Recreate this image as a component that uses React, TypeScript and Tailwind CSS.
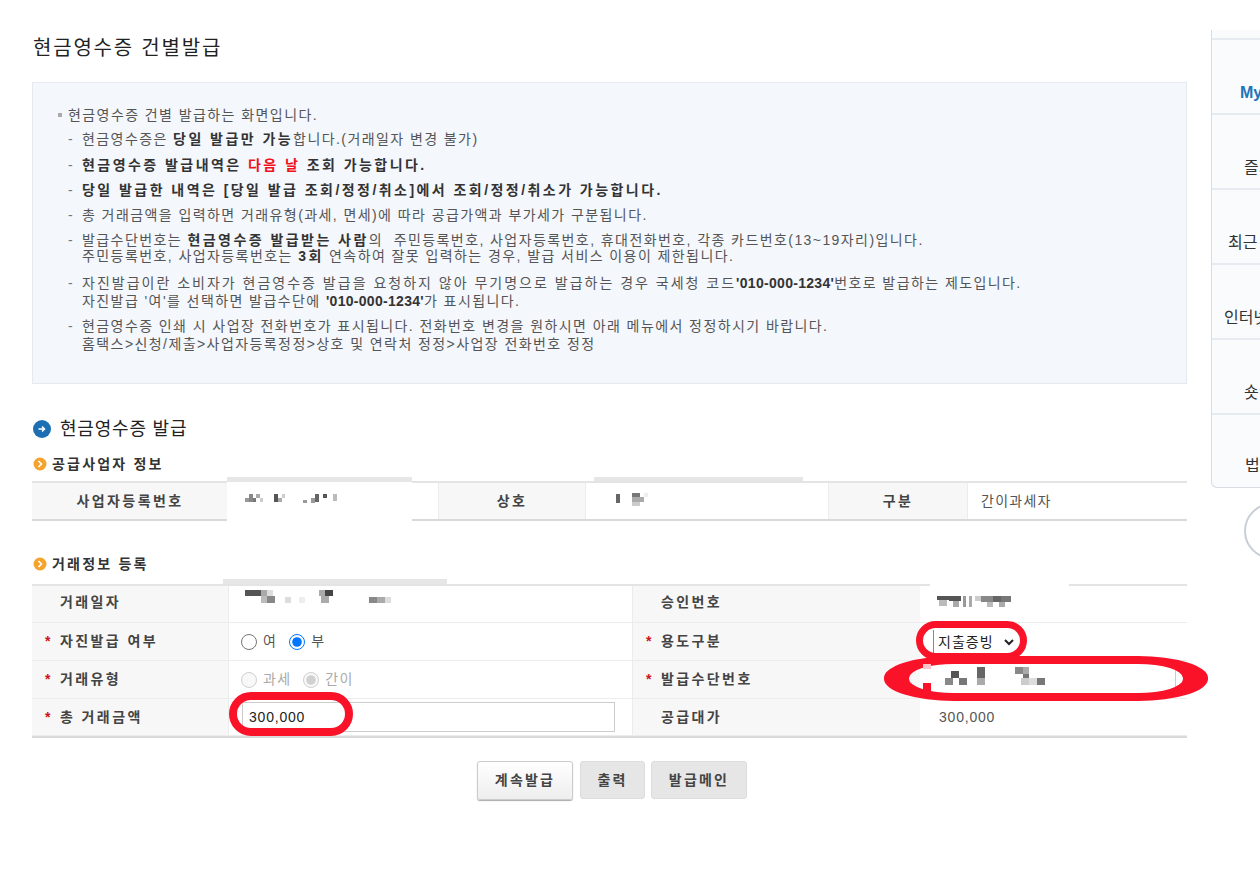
import React from 'react';

const FONT = "font-['Liberation_Sans','Noto_Sans_CJK_KR',sans-serif]";

type Block = [number, number, number, number, string];

// pixelated redaction marks
const Mosaic = ({ className, w, h, blocks }: { className: string; w: number; h: number; blocks: Block[] }) => (
    <svg className={className} width={w} height={h} viewBox={`0 0 ${w} ${h}`} shapeRendering="crispEdges">
        {blocks.map(([x, y, bw, bh, fill], i) => (
            <rect key={i} x={x} y={y} width={bw} height={bh} fill={fill} />
        ))}
    </svg>
);

const OrangeIcon = () => (
    <svg width="14" height="14" viewBox="0 0 14 14" className="shrink-0">
        <circle cx="7" cy="7" r="6.5" fill="#f5a32c" />
        <path d="M5.5 4l3 3-3 3" fill="none" stroke="#fff" strokeWidth="1.6" />
    </svg>
);

const BlueIcon = () => (
    <svg width="18" height="18" viewBox="0 0 18 18" className="shrink-0">
        <circle cx="9" cy="9" r="9" fill="#1d6fb3" />
        <path d="M5.5 9h6M9 6.5L11.5 9 9 11.5" fill="none" stroke="#fff" strokeWidth="1.5" />
    </svg>
);

const Note = ({ children, className = '' }: { children: React.ReactNode; className?: string }) => (
    <div className={`flex ${className}`}>
        <span className="w-[14px] shrink-0 text-[#777]">-</span>
        <div>{children}</div>
    </div>
);

const B = ({ children }: { children: React.ReactNode }) => (
    <b className="text-[#333] tracking-[2.45px]">{children}</b>
);

const Code = () => <b className="text-[#333] tracking-[0.3px]">'010-000-1234'</b>;

const Label = ({ children, star, wide, className = '' }: { children: React.ReactNode; star?: boolean; wide?: boolean; className?: string }) => (
    <div className={`flex items-center bg-[#f7f7f7] font-bold text-[#444] tracking-[2.4px] ${wide ? 'border-l border-[#ececec]' : ''} ${className}`}>
        <span className="w-[28px] shrink-0 pl-[13px] text-[#d0121b]">{star ? '*' : ''}</span>
        {children}
    </div>
);

const Center = ({ children, className = '' }: { children: React.ReactNode; className?: string }) => (
    <div className={`flex items-center justify-center bg-[#f7f7f7] font-bold text-[#444] tracking-[2.4px] ${className}`}>
        {children}
    </div>
);

const SideItem = ({ text, pad, className = '' }: { text: string; pad: string; className?: string }) => (
    <div className={`h-[75px] flex items-end pb-[8px] border-b-2 border-[#e6ebf1] whitespace-nowrap text-[16px] text-[#333] ${pad} ${className}`}>
        {text}
    </div>
);

export default function App() {
    return (
        <div className={`${FONT} relative w-[1260px] h-[891px] overflow-hidden bg-white flex text-[14px] text-[#555]`}>
            <main className="ml-[32px] w-[1155px] shrink-0">
                <h1 className="mt-[34px] ml-[1px] h-[28px] leading-[28px] text-[20px] text-[#222] tracking-[1.8px]">현금영수증 건별발급</h1>

                <section className="mt-[20px] h-[302px] border border-[#e5eaf1] bg-[#f4f7fc] pl-[25px] pt-[23px] leading-[18px] tracking-[1.42px] text-[#555]">
                    <div className="flex items-center h-[18px]">
                        <span className="w-[4px] h-[4px] bg-[#aaa] mr-[6px]" />
                        현금영수증 건별 발급하는 화면입니다.
                    </div>
                    <div className="pl-[10px]">
                        <Note className="mt-[6px]">현금영수증은 <B>당일 발급만 가능</B>합니다.(거래일자 변경 불가)</Note>
                        <Note className="mt-[8px]"><B>현금영수증 발급내역은 <span className="text-[#f01020]">다음 날</span> 조회 가능합니다.</B></Note>
                        <Note className="mt-[7px]"><B>당일 발급한 내역은 [당일 발급 조회/정정/취소]에서 조회/정정/취소가 가능합니다.</B></Note>
                        <Note className="mt-[7px]">총 거래금액을 입력하면 거래유형(과세, 면세)에 따라 공급가액과 부가세가 구분됩니다.</Note>
                        <Note className="mt-[8px] leading-[16px]">
                            발급수단번호는 <B>현금영수증 발급받는 사람</B>의 &nbsp;주민등록번호, 사업자등록번호, 휴대전화번호, 각종 카드번호(13~19자리)입니다.
                            <br />
                            주민등록번호, 사업자등록번호는 <B>3회</B> 연속하여 잘못 입력하는 경우, 발급 서비스 이용이 제한됩니다.
                        </Note>
                        <Note className="mt-[10px]">
                            <span className="tracking-[2px]">자진발급이란 소비자가 현금영수증 발급을 요청하지 않아 무기명으로 발급하는 경우 국세청 코드</span><Code />번호로 발급하는 제도입니다.
                            <br />
                            자진발급 '여'를 선택하면 발급수단에 <Code />가 표시됩니다.
                        </Note>
                        <Note className="mt-[7px]">
                            현금영수증 인쇄 시 사업장 전화번호가 표시됩니다. 전화번호 변경을 원하시면 아래 메뉴에서 정정하시기 바랍니다.
                            <br />
                            홈택스&gt;신청/제출&gt;사업자등록정정&gt;상호 및 연락처 정정&gt;사업장 전화번호 정정
                        </Note>
                    </div>
                </section>

                <h2 className="mt-[32px] ml-[1px] h-[26px] flex items-center gap-[9px] text-[18px] text-[#222] tracking-[0.8px]">
                    <BlueIcon />
                    현금영수증 발급
                </h2>

                <h3 className="mt-[12px] ml-[1px] h-[20px] flex items-center gap-[5px] font-bold text-[#333] tracking-[2.2px]">
                    <OrangeIcon />
                    공급사업자 정보
                </h3>

                <div className="relative mt-[7px] h-[40px] grid grid-cols-[196px_210px_148px_242px_140px_219px] border-t-2 border-b-2 border-t-[#e4e4e4] border-b-[#d9d9d9]">
                    <Center>사업자등록번호</Center>
                    <div className="bg-white" />
                    <Center className="border-x border-[#ececec]">상호</Center>
                    <div className="bg-white" />
                    <Center className="border-x border-[#ececec]">구분</Center>
                    <div className="flex items-center pl-[13px] text-[#555] tracking-[1.27px]">간이과세자</div>

                    <div className="absolute left-[195px] top-[-6px] w-[185px] h-[5px] bg-[#e6e6e6]" />
                    <div className="absolute left-[195px] top-[-1px] w-[185px] h-[41px] bg-white" />
                    <div className="absolute left-[562px] top-[-6px] w-[209px] h-[4px] bg-[#e6e6e6]" />
                    <Mosaic className="absolute left-[213px] top-[11px]" w={100} h={14} blocks={[
                        [0, 4, 4, 4, '#999'], [4, 0, 4, 8, '#888'], [8, 4, 3, 4, '#777'], [11, 0, 4, 4, '#aaa'], [15, 4, 3, 4, '#ccc'],
                        [29, 0, 4, 8, '#555'], [33, 4, 4, 4, '#aaa'], [37, 0, 3, 4, '#ccc'], [58, 6, 4, 3, '#999'], [66, 4, 4, 5, '#999'],
                        [70, 0, 4, 8, '#666'], [78, 0, 4, 4, '#555'], [88, 0, 4, 7, '#bbb'],
                    ]} />
                    <Mosaic className="absolute left-[584px] top-[10px]" w={32} h={16} blocks={[
                        [0, 1, 4, 9, '#666'], [16, 0, 8, 4, '#777'], [16, 4, 12, 5, '#aaa'], [16, 9, 8, 4, '#ccc'], [28, 0, 4, 4, '#eee'],
                    ]} />
                </div>

                <h3 className="mt-[33px] ml-[1px] h-[20px] flex items-center gap-[5px] font-bold text-[#333] tracking-[2.2px]">
                    <OrangeIcon />
                    거래정보 등록
                </h3>

                <div className="relative mt-[10px] grid grid-cols-[196px_404px_288px_267px] grid-rows-[37px_38px_38px_37px] border-t-2 border-b-2 border-t-[#e4e4e4] border-b-[#d9d9d9] [&>*]:border-b [&>*]:border-[#ececec]">
                    <Label className="pb-[3px]">거래일자</Label>
                    <div className="border-l border-[#ececec]" />
                    <Label wide className="pb-[3px]">승인번호</Label>
                    <div />

                    <Label star>자진발급 여부</Label>
                    <div className="flex items-center pl-[12px] border-l gap-[6px] tracking-[1.27px]">
                        <input type="radio" name="self" className="m-0 w-[16px] h-[16px]" />
                        <span className="mr-[6px]">여</span>
                        <input type="radio" name="self" defaultChecked className="m-0 w-[16px] h-[16px]" />
                        <span>부</span>
                    </div>
                    <Label star wide>용도구분</Label>
                    <div className="flex items-center pl-[13px]">
                        <select className="w-[84px] h-[24px] bg-white border-l border-[#888] text-[14px] text-[#222] tracking-[1px]" defaultValue="a">
                            <option value="a">지출증빙</option>
                        </select>
                    </div>

                    <Label star>거래유형</Label>
                    <div className="flex items-center pl-[12px] border-l gap-[6px] text-[#aaa] tracking-[1.27px]">
                        <input type="radio" name="kind" disabled className="m-0 w-[16px] h-[16px]" />
                        <span className="mr-[6px]">과세</span>
                        <input type="radio" name="kind" disabled defaultChecked className="m-0 w-[16px] h-[16px]" />
                        <span>간이</span>
                    </div>
                    <Label star wide>발급수단번호</Label>
                    <div className="flex items-center">
                        <div className="ml-[1px] w-[255px] h-[26px] border-r border-[#ccc]" />
                    </div>

                    <Label star>총 거래금액</Label>
                    <div className="flex items-center pl-[13px] border-l">
                        <input
                            readOnly
                            value="300,000"
                            className="w-[373px] h-[30px] border border-[#ccc] pl-[6px] text-[14px] tracking-[0.8px] text-[#222] outline-none"
                        />
                    </div>
                    <Label wide>공급대가</Label>
                    <div className="flex items-center pl-[19px] text-[14px] tracking-[0.8px] text-[#555]">300,000</div>

                    <div className="absolute !border-0 left-[191px] top-[-7px] w-[224px] h-[5px] bg-[#e6e6e6]" />
                    <div className="absolute !border-0 left-[898px] top-[-7px] w-[139px] h-[8px] bg-white" />
                    <Mosaic className="absolute !border-0 left-[213px] top-[4px]" w={148} h={18} blocks={[
                        [0, 0, 16, 6, '#555'], [16, 0, 6, 6, '#aaa'], [22, 0, 6, 6, '#ddd'], [16, 6, 6, 7, '#bbb'], [22, 6, 8, 7, '#888'],
                        [40, 7, 6, 6, '#ddd'], [54, 7, 6, 6, '#eee'], [74, 0, 6, 6, '#aaa'], [80, 0, 8, 6, '#444'], [76, 6, 8, 7, '#aaa'],
                        [124, 7, 8, 6, '#888'], [132, 7, 8, 6, '#aaa'], [140, 7, 6, 6, '#ddd'],
                    ]} />
                    <Mosaic className="absolute !border-0 left-[905px] top-[8px]" w={76} h={15} blocks={[
                        [0, 2, 12, 4, '#555'], [2, 6, 8, 6, '#bbb'], [12, 2, 12, 5, '#555'], [16, 7, 6, 6, '#aaa'], [26, 2, 3, 11, '#999'],
                        [32, 2, 3, 11, '#aaa'], [38, 2, 6, 5, '#ccc'], [44, 2, 12, 6, '#888'], [50, 8, 6, 5, '#bbb'], [56, 2, 8, 6, '#666'],
                        [64, 2, 10, 6, '#777'], [62, 8, 6, 5, '#aaa'],
                    ]} />
                    <div className="absolute !border-0 left-[889px] top-[75px] w-[189px] h-[34px] bg-white" />
                    <Mosaic className="absolute !border-0 left-[913px] top-[81px]" w={104} h={18} blocks={[
                        [0, 11, 8, 7, '#888'], [6, 4, 8, 7, '#555'], [14, 11, 8, 7, '#777'], [32, 0, 8, 11, '#666'], [32, 11, 8, 7, '#aaa'],
                        [70, 0, 8, 7, '#888'], [78, 0, 6, 7, '#aaa'], [78, 7, 6, 5, '#777'], [76, 11, 8, 7, '#ccc'], [84, 11, 8, 7, '#ddd'], [92, 11, 8, 7, '#777'],
                    ]} />
                </div>

                <div className="mt-[23px] ml-[445px] flex items-start gap-[7px] font-bold text-[#444] tracking-[2.2px]">
                    <button className="w-[96px] h-[39px] rounded-[3px] border border-[#ccc] bg-gradient-to-b from-white to-[#eee] shadow-[0_1px_1px_#aaa]">계속발급</button>
                    <button className="w-[65px] h-[38px] rounded-[3px] border border-[#ddd] bg-[#e6e6e6]">출력</button>
                    <button className="-ml-[1px] w-[96px] h-[38px] rounded-[3px] border border-[#ddd] bg-[#e6e6e6]">발급메인</button>
                </div>
            </main>

            <aside className="ml-[24px] w-[120px] shrink-0">
                <div className="mt-[30px] h-[458px] rounded-bl-[6px] border-l border-b border-[#d8dde4] bg-[#fafbfc]">
                    <div className="h-[10px] border-b-2 border-[#e6ebf1]" />
                    <SideItem text="MyHome" pad="pl-[28px]" className="font-bold !text-[#1b75bb]" />
                    <SideItem text="즐겨찾기" pad="pl-[32px]" />
                    <SideItem text="최근 메뉴" pad="pl-[16px]" />
                    <SideItem text="인터넷" pad="pl-[12px]" />
                    <SideItem text="숏컷" pad="pl-[32px]" />
                    <div className="h-[73px] flex items-end pb-[10px] pl-[33px] text-[16px] text-[#333]">법인</div>
                </div>
                <div className="mt-[15px] ml-[33px] w-[56px] h-[56px] rounded-full border-2 border-[#c9ced6] bg-white" />
            </aside>

            {/* red marker rings drawn over the form */}
            <div className="absolute left-[916px] top-[621px] w-[111px] h-[39px] rounded-[20px] border-[7px] border-[#f91228]" />
            <div className="absolute left-[884px] top-[656px] w-[324px] h-[45px] rounded-[70px/22px] border-x-[25px] border-y-[8px] border-[#f91228]" />
            <div className="absolute left-[229px] top-[692px] w-[124px] h-[44px] rounded-[22px] border-[8px] border-[#f91228]" />
            <div className="absolute left-[923px] top-[683px] w-[8px] h-[8px] bg-[#f91228]" />
            <div className="absolute left-[923px] top-[664px] w-[8px] h-[5px] bg-[#fbc4cb]" />
        </div>
    );
}
